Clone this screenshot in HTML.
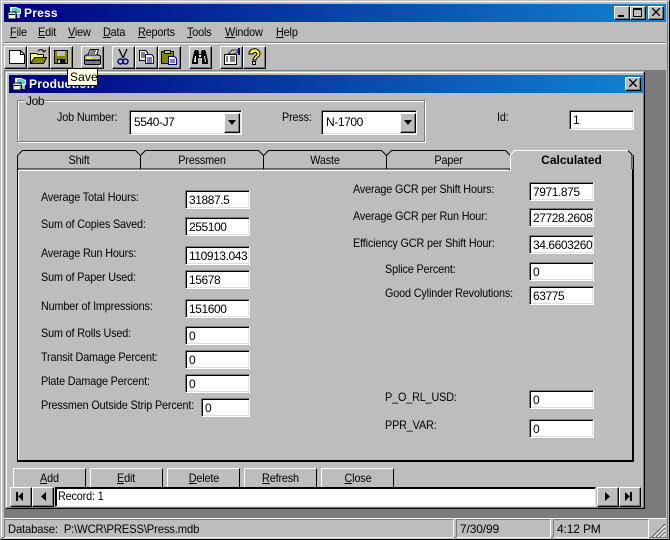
<!DOCTYPE html>
<html><head><meta charset="utf-8"><style>
html,body{margin:0;padding:0;background:#bdbdbd}
#r{position:relative;width:670px;height:540px;overflow:hidden;background:#bdbdbd;font:12px/14px "Liberation Sans",sans-serif;color:#000;letter-spacing:-.15px}
#r div,#r svg{position:absolute}
.l{white-space:nowrap;height:14px;transform:scaleX(.9);transform-origin:0 0}
.l.c{transform-origin:50% 0}
.l.n{transform:none}
.t{width:63px;height:19px;box-sizing:border-box;background:#fff;border-top:1px solid #7b7b7b;border-left:1px solid #7b7b7b;border-right:1px solid #fff;border-bottom:1px solid #fff;box-shadow:inset 1px 1px 0 #000,inset -1px -1px 0 #dedede;padding:2px 0 0 3px;white-space:nowrap;overflow:hidden;letter-spacing:-.42px}
.b{box-sizing:border-box;background:#bdbdbd;border-top:1px solid #fff;border-left:1px solid #fff;border-right:1px solid #000;border-bottom:1px solid #000;box-shadow:inset -1px -1px 0 #7b7b7b}
.s{box-sizing:border-box;border-top:1px solid #7b7b7b;border-left:1px solid #7b7b7b;border-right:1px solid #fff;border-bottom:1px solid #fff;height:19px;padding:2px 0 0 3px;white-space:nowrap}
.c{text-align:center}
#r span{display:inline-block;transform:scaleX(.9);transform-origin:0 0}
#r .c span{transform-origin:50% 0}
u{text-decoration:underline}
</style></head><body><div id="r">
<!-- outer frame -->
<div style="left:0;top:0;width:670px;height:540px;box-sizing:border-box;border:1px solid #000;border-left-color:#bdbdbd;border-top-color:#bdbdbd"></div>
<div style="left:1px;top:1px;width:667px;height:537px;box-sizing:border-box;border:1px solid #7b7b7b;border-left-color:#fff;border-top-color:#fff"></div>
<!-- title -->
<div style="left:4px;top:4px;width:662px;height:18px;background:linear-gradient(90deg,#000080,#1084d0)"></div>
<svg style="left:7px;top:6px" width="15" height="15" viewBox="0 0 15 15"><path d="M3 1h6l5 2v5H3z" fill="#fff"/><path d="M5 2h5l3 2v3H5z" fill="#4fd0d0"/><path d="M1 6h8v7H1z" fill="#dfe" stroke="#000"/><path d="M2 8h6v1H2z" fill="#000"/><path d="M10 8h3v4h-3z" fill="#bbb"/></svg>
<div class="l n" style="left:24px;top:6px;color:#fff;font-weight:bold;letter-spacing:.2px">Press</div>
<div class="b" style="left:614px;top:6px;width:16px;height:14px"></div><div style="left:618px;top:15px;width:6px;height:2px;background:#000"></div>
<div class="b" style="left:630px;top:6px;width:16px;height:14px"></div><div style="left:633px;top:8px;width:9px;height:9px;box-sizing:border-box;border:1px solid #000;border-top-width:2px"></div>
<div class="b" style="left:648px;top:6px;width:16px;height:14px"></div>
<svg style="left:652px;top:8px" width="9" height="8"><path d="M1 0l3 3 3-3h1v1L5 4l3 3v1H7L4 5 1 8H0V7l3-3L0 1V0z" fill="#000"/></svg>
<!-- menu -->
<div class="l" style="left:10px;top:25px"><u>F</u>ile</div>
<div class="l" style="left:38px;top:25px"><u>E</u>dit</div>
<div class="l" style="left:68px;top:25px"><u>V</u>iew</div>
<div class="l" style="left:103px;top:25px"><u>D</u>ata</div>
<div class="l" style="left:138px;top:25px"><u>R</u>eports</div>
<div class="l" style="left:187px;top:25px"><u>T</u>ools</div>
<div class="l" style="left:225px;top:25px"><u>W</u>indow</div>
<div class="l" style="left:276px;top:25px"><u>H</u>elp</div>
<div style="left:4px;top:42px;width:662px;height:1px;background:#7b7b7b"></div>
<div style="left:4px;top:43px;width:662px;height:1px;background:#fff"></div>
<!-- toolbar buttons -->
<div class="b" style="left:4px;top:46px;width:23px;height:23px"></div>
<div class="b" style="left:27px;top:46px;width:23px;height:23px"></div>
<div class="b" style="left:50px;top:46px;width:23px;height:23px"></div>
<div class="b" style="left:81px;top:46px;width:23px;height:23px"></div>
<div class="b" style="left:112px;top:46px;width:23px;height:23px"></div>
<div class="b" style="left:135px;top:46px;width:23px;height:23px"></div>
<div class="b" style="left:158px;top:46px;width:23px;height:23px"></div>
<div class="b" style="left:189px;top:46px;width:23px;height:23px"></div>
<div class="b" style="left:220px;top:46px;width:23px;height:23px"></div>
<div class="b" style="left:243px;top:46px;width:23px;height:23px"></div>
<svg style="left:0;top:44px" width="280" height="26" viewBox="0 44 280 26">
<path d="M9.500 50.500h11l4 4v9h-15z" fill="#fff" stroke="#000"/><path d="M20.500 50.500v4h4" fill="none" stroke="#000"/>
<path d="M30.500 53.500h6l1 1h6v9h-13z" fill="#ffff84" stroke="#000"/><path d="M30.500 63.500l4-6h12l-3 6z" fill="#848400" stroke="#000"/><path d="M38 51c2-2 5-2 6 1M42 50l2 2 2-2" fill="none" stroke="#000"/>
<path d="M54.500 50.500h13v13h-13z" fill="#848400" stroke="#000"/><path d="M57 51h8v5h-8z" fill="#bdbdbd"/><path d="M57 59h8v5h-8z" fill="#000"/><path d="M58 60h2v3h-2z" fill="#bdbdbd"/>
<path d="M87.500 55.500l3-6h8l-2 6z" fill="#fff" stroke="#000"/><path d="M90 53h5M91 51h5" stroke="#000"/><path d="M84.500 57c0-1 1-2 3-2h10c2 0 3 1 3 2v3h-16z" fill="#bdbdbd" stroke="#000"/><path d="M84.500 60.500h16v3c0 1-1 1-2 1h-12c-1 0-2 0-2-1z" fill="#7b7b7b" stroke="#000"/><path d="M87 58h5" stroke="#ff0" stroke-width="2"/><path d="M99 65h2v2h-2z" fill="#fff"/>
<path d="M119 49l4 9M127 49l-4 9" stroke="#000" stroke-width="1.300" fill="none"/><circle cx="120.500" cy="61.500" r="2.500" fill="none" stroke="#000080" stroke-width="1.500"/><circle cx="125.500" cy="61.500" r="2.500" fill="none" stroke="#000080" stroke-width="1.500"/>
<path d="M139.500 50.500h6l2 2v8h-8z" fill="#fff" stroke="#000"/><path d="M141 53h4M141 55h4M141 57h4" stroke="#000"/><path d="M145.500 54.500h6l2 2v7h-8z" fill="#fff" stroke="#000080"/><path d="M147 58h5M147 60h5M147 62h5" stroke="#000080"/>
<path d="M161.500 51.500h12v12h-12z" fill="#848400" stroke="#000"/><path d="M164.500 50.500h6v3h-6z" fill="#bdbdbd" stroke="#000"/><path d="M168.500 56.500h6l2 2v6h-8z" fill="#fff" stroke="#000080"/><path d="M170 60h5M170 62h5" stroke="#000080"/>
<path d="M192 61l2-9 1-2h3l1 2v2h2v-2l1-2h3l1 2 2 9v3h-6v-6h-4v6h-6z" fill="#000"/><path d="M194 62h2v-6h-1zM204 56l1 6h1l-1-6z" fill="#fff"/><path d="M199 55h2v2h-2z" fill="#fff"/>
<path d="M224.500 54.500h12v10h-12z" fill="#fff" stroke="#000"/><path d="M226 57h2M230 57h5M226 59h2M230 59h5M226 61h2M230 61h5" stroke="#000"/><path d="M228 54l4-4h5l1 2-4 2z" fill="#bdbdbd" stroke="#000" stroke-width=".7"/><path d="M238 48h2v7h-2z" fill="#000080"/>
<path d="M249 54c0-7 11-7 11 0 0 3-4 3-4 6h-3c0-4 4-4 4-6 0-2-4-2-4 0z" fill="#ff0" stroke="#000"/><path d="M252.500 61.500h3v3h-3z" fill="#ff0" stroke="#000"/>
</svg>
<!-- MDI dark -->
<div style="left:4px;top:70px;width:662px;height:1px;background:#7b7b7b"></div>
<div style="left:645px;top:71px;width:21px;height:448px;background:#7b7b7b"></div>
<div style="left:4px;top:509px;width:662px;height:10px;background:#7b7b7b"></div>
<div style="left:4px;top:71px;width:1px;height:438px;background:#7b7b7b"></div>
<!-- inner window -->
<div style="left:5px;top:71px;width:640px;height:438px;box-sizing:border-box;background:#bdbdbd;border:1px solid #000;border-left-color:#bdbdbd;border-top-color:#bdbdbd"></div>
<div style="left:6px;top:72px;width:638px;height:436px;box-sizing:border-box;border:1px solid #7b7b7b;border-left-color:#fff;border-top-color:#fff"></div>
<div style="left:9px;top:75px;width:634px;height:18px;background:linear-gradient(90deg,#000080,#1084d0)"></div>
<svg style="left:12px;top:77px" width="15" height="15" viewBox="0 0 15 15"><path d="M3 1h6l5 2v5H3z" fill="#fff"/><path d="M5 2h5l3 2v3H5z" fill="#4fd0d0"/><path d="M1 6h8v7H1z" fill="#dfe" stroke="#000"/><path d="M2 8h6v1H2z" fill="#000"/><path d="M10 8h3v4h-3z" fill="#bbb"/></svg>
<div class="l n" style="left:29px;top:77px;color:#fff;font-weight:bold;letter-spacing:.2px">Production</div>
<div class="b" style="left:625px;top:77px;width:16px;height:14px"></div>
<svg style="left:629px;top:79px" width="9" height="8"><path d="M1 0l3 3 3-3h1v1L5 4l3 3v1H7L4 5 1 8H0V7l3-3L0 1V0z" fill="#000"/></svg>
<!-- tooltip -->
<div class="l n" style="left:67px;top:68px;width:31px;height:18px;box-sizing:border-box;background:#ffffe1;border:1px solid #000;padding:1px 0 0 2px;letter-spacing:.1px">Save</div>
<!-- job group -->
<div style="left:17px;top:100px;width:408px;height:42px;box-sizing:border-box;border:1px solid #7b7b7b;box-shadow:1px 1px 0 #fff,inset 1px 1px 0 #fff"></div>
<div class="l n" style="left:25px;top:94px;background:#bdbdbd;padding:0 1px;letter-spacing:-.4px">Job</div>
<div class="l" style="left:57px;top:110px">Job Number:</div>
<div class="l" style="left:282px;top:110px">Press:</div>
<div class="l" style="left:497px;top:110px">Id:</div>
<div class="t" style="left:129px;top:110px;width:113px;height:25px;padding-top:4px;padding-left:4px">5540-J7</div>
<div class="b" style="left:224px;top:113px;width:16px;height:20px"></div>
<svg style="left:227px;top:120px" width="10" height="6"><path d="M1 0h8L5 5z" fill="#000"/></svg>
<div class="t" style="left:321px;top:110px;width:96px;height:25px;padding-top:4px;padding-left:4px">N-1700</div>
<div class="b" style="left:400px;top:113px;width:16px;height:20px"></div>
<svg style="left:403px;top:120px" width="10" height="6"><path d="M1 0h8L5 5z" fill="#000"/></svg>
<div class="t" style="left:569px;top:110px;width:65px;height:20px">1</div>
<!-- tab panel -->
<div style="left:17px;top:169px;width:617px;height:293px;box-sizing:border-box;border:1px solid #000;border-right-width:2px;border-bottom-width:2px;box-shadow:inset 1px 1px 0 #fff"></div>
<svg style="left:17px;top:149px" width="620" height="24" viewBox="17 149 620 24">
<path d="M17.500 169.500v-14l5-5h113l5 5v14" fill="#bdbdbd" stroke="#000"/>
<path d="M140.500 169.500v-14l5-5h113l5 5v14" fill="#bdbdbd" stroke="#000"/>
<path d="M263.500 169.500v-14l5-5h113l5 5v14" fill="#bdbdbd" stroke="#000"/>
<path d="M386.500 169.500v-14l5-5h114l5 5v14" fill="#bdbdbd" stroke="#000"/>
<path d="M18 170h491" stroke="#fff"/>
<path d="M18 169h492" stroke="#000"/>
<path d="M510.500 171v-16l4-4.500h114l4 4.500v14" fill="#bdbdbd" stroke="#fff"/>
<path d="M628 150.500l4 4v15M633.500 155v15" stroke="#000" fill="none"/>
<path d="M511 169h121v3H511z" fill="#bdbdbd"/>
<path d="M18 170.500h492" stroke="#fff"/>
<path d="M510 170v1" stroke="#fff"/>
</svg>
<div class="c l" style="left:18px;top:153px;width:122px">Shift</div>
<div class="c l" style="left:141px;top:153px;width:122px">Pressmen</div>
<div class="c l" style="left:264px;top:153px;width:122px">Waste</div>
<div class="c l" style="left:387px;top:153px;width:123px">Paper</div>
<div class="c l n" style="left:511px;top:153px;width:121px;font-weight:bold;letter-spacing:0">Calculated</div>
<!-- left fields -->
<div class="l" style="left:41px;top:190px">Average Total Hours:</div><div class="t" style="left:185px;top:190px;width:65px">31887.5</div>
<div class="l" style="left:41px;top:217px">Sum of Copies Saved:</div><div class="t" style="left:185px;top:217px;width:65px">255100</div>
<div class="l" style="left:41px;top:246px">Average Run Hours:</div><div class="t" style="left:185px;top:246px;width:65px">110913.043</div>
<div class="l" style="left:41px;top:270px">Sum of Paper Used:</div><div class="t" style="left:185px;top:270px;width:65px">15678</div>
<div class="l" style="left:41px;top:299px">Number of Impressions:</div><div class="t" style="left:185px;top:299px;width:65px">151600</div>
<div class="l" style="left:41px;top:326px">Sum of Rolls Used:</div><div class="t" style="left:185px;top:326px;width:65px">0</div>
<div class="l" style="left:41px;top:350px">Transit Damage Percent:</div><div class="t" style="left:185px;top:350px;width:65px">0</div>
<div class="l" style="left:41px;top:374px">Plate Damage Percent:</div><div class="t" style="left:185px;top:374px;width:65px">0</div>
<div class="l" style="left:41px;top:398px">Pressmen Outside Strip Percent:</div><div class="t" style="left:201px;top:398px;width:49px">0</div>
<!-- right fields -->
<div class="l" style="left:353px;top:182px">Average GCR per Shift Hours:</div><div class="t" style="left:529px;top:182px;width:65px">7971.875</div>
<div class="l" style="left:353px;top:209px">Average GCR per Run Hour:</div><div class="t" style="left:529px;top:208px;width:65px">27728.2608</div>
<div class="l" style="left:353px;top:236px">Efficiency GCR per Shift Hour:</div><div class="t" style="left:529px;top:235px;width:65px">34.6603260</div>
<div class="l" style="left:385px;top:262px">Splice Percent:</div><div class="t" style="left:529px;top:262px;width:65px">0</div>
<div class="l" style="left:385px;top:286px">Good Cylinder Revolutions:</div><div class="t" style="left:529px;top:286px;width:65px">63775</div>
<div class="l" style="left:385px;top:390px">P_O_RL_USD:</div><div class="t" style="left:529px;top:390px;width:65px">0</div>
<div class="l" style="left:385px;top:418px">PPR_VAR:</div><div class="t" style="left:529px;top:419px;width:65px">0</div>
<!-- bottom buttons -->
<div class="b c" style="left:13px;top:468px;width:73px;height:20px;padding-top:2px;border-bottom:0;box-shadow:none"><span><u>A</u>dd</span></div>
<div class="b c" style="left:90px;top:468px;width:73px;height:20px;padding-top:2px;border-bottom:0;box-shadow:none"><span><u>E</u>dit</span></div>
<div class="b c" style="left:167px;top:468px;width:73px;height:20px;padding-top:2px;border-bottom:0;box-shadow:none"><span><u>D</u>elete</span></div>
<div class="b c" style="left:244px;top:468px;width:73px;height:20px;padding-top:2px;border-bottom:0;box-shadow:none"><span><u>R</u>efresh</span></div>
<div class="b c" style="left:321px;top:468px;width:73px;height:20px;padding-top:2px;border-bottom:0;box-shadow:none"><span><u>C</u>lose</span></div>
<!-- nav -->
<div class="b" style="left:10px;top:487px;width:22px;height:20px"></div>
<div class="b" style="left:32px;top:487px;width:22px;height:20px"></div>
<div class="b" style="left:597px;top:487px;width:22px;height:20px"></div>
<div class="b" style="left:619px;top:487px;width:22px;height:20px"></div>
<svg style="left:0;top:487px" width="660" height="20" viewBox="0 487 660 20"><path d="M16 492h2v9h-2zM23 492v9l-5-4.500zM46 492v9l-5-4.500zM605 492v9l5-4.500zM625 492v9l5-4.500zM630 492h2v9h-2z" fill="#000"/></svg>
<div style="left:55px;top:487px;width:541px;height:20px;box-sizing:border-box;background:#fff;border-top:1px solid #000;border-left:1px solid #000;border-right:1px solid #dedede;border-bottom:1px solid #dedede;box-shadow:inset 1px 1px 0 #000;padding:1px 0 0 2px"><span>Record: 1</span></div>
<!-- status -->
<div style="left:4px;top:518px;width:662px;height:1px;background:#fff"></div>
<div class="s" style="left:4px;top:519px;width:450px"><span style="transform:scaleX(.935)">Database:&nbsp; P:\WCR\PRESS\Press.mdb</span></div>
<div class="s" style="left:456px;top:519px;width:95px"><span style="transform:none">7/30/99</span></div>
<div class="s" style="left:553px;top:519px;width:96px"><span style="transform:none">4:12 PM</span></div>
<svg style="left:651px;top:523px" width="15" height="15"><path d="M14 1L1 14M14 5L5 14M14 9l-5 5" stroke="#7b7b7b" stroke-width="1.500"/><path d="M14 3L3 14M14 7l-7 7M14 11l-3 3" stroke="#fff"/></svg>
</div></body></html>
